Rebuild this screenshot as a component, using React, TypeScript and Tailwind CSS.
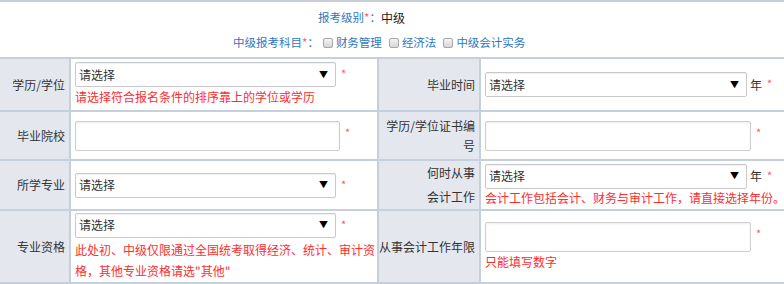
import React from "react"

const font = { fontFamily: '"Noto Sans CJK SC", "Noto Sans", sans-serif' }

function Star() {
  return <span className="ml-[5px] self-start pt-[6px] text-[11px] leading-none text-[#ff5a5a]">*</span>
}

function Select({ width }: { width: string }) {
  return (
    <div
      className={`flex h-[25px] ${width} items-center justify-between rounded-[2px] border border-[#c9c9c9] bg-white pl-[3px] pr-[7px] text-[12px] text-[#333] shadow-[inset_0_1px_1px_rgba(0,0,0,0.06)]`}
    >
      <span>请选择</span>
      <span className="text-[9px] text-black">▼</span>
    </div>
  )
}

function Input({ width }: { width: string }) {
  return (
    <div
      className={`h-[30px] ${width} rounded-[2px] border border-[#cfcfcf] bg-white shadow-[inset_0_1px_2px_rgba(0,0,0,0.08)]`}
    />
  )
}

function Hint({ children, className = "" }: { children: React.ReactNode; className?: string }) {
  return <div className={`whitespace-nowrap text-[12px] text-[#ff2d2d] ${className}`}>{children}</div>
}

function Label({ children, className = "" }: { children: React.ReactNode; className?: string }) {
  return (
    <div className={`flex items-center justify-end bg-[#e4e8ee] pr-[4px] text-right text-[12px] text-[#333] ${className}`}>
      <div>{children}</div>
    </div>
  )
}

function Cell({ children }: { children: React.ReactNode }) {
  return <div className="flex min-w-0 flex-col justify-center overflow-hidden bg-white pl-[4px]">{children}</div>
}

function Check({ label }: { label: string }) {
  return (
    <label className="flex items-center gap-[3px]">
      <span className="inline-block h-[10px] w-[10px] rounded-[2px] border border-[#a8a8a8] bg-gradient-to-b from-[#f4f4f4] to-[#d6d6d6]" />
      <span>{label}</span>
    </label>
  )
}

export default function App() {
  return (
    <div className="h-[284px] w-[784px] overflow-hidden bg-white" style={font}>
      <div className="h-[2px] bg-[#c8ced6]" />

      {/* exam level & subjects */}
      <div className="h-[55px] text-[11.5px]">
        <div className="flex h-[30px] items-center pl-[318px] pt-[2px]">
          <span className="text-[#2f78c0]">
            报考级别<span className="text-[#ff5a5a]">*</span>：
          </span>
          <span className="text-[12px] text-[#222]">中级</span>
        </div>
        <div className="flex h-[22px] items-center pl-[233px] text-[#2f78c0]">
          <span>
            中级报考科目<span className="text-[#ff5a5a]">*</span>：
          </span>
          <div className="ml-[4px] flex items-center gap-[7px]">
            <Check label="财务管理" />
            <Check label="经济法" />
            <Check label="中级会计实务" />
          </div>
        </div>
      </div>

      {/* form table */}
      <div className="grid grid-cols-[69px_306px_100px_1fr] grid-rows-[51px_47px_48px_71px] gap-[2px] border-y-2 border-[#c6d0dc] bg-[#c6d0dc]">
        <Label>学历/学位</Label>
        <Cell>
          <div className="flex items-center">
            <Select width="w-[261px]" />
            <Star />
          </div>
          <Hint className="leading-[20px]">请选择符合报名条件的排序靠上的学位或学历</Hint>
        </Cell>
        <Label>毕业时间</Label>
        <Cell>
          <div className="flex items-center text-[12px] text-[#333]">
            <Select width="w-[262px]" />
            <span className="ml-[3px]">年</span>
            <Star />
          </div>
        </Cell>

        <Label>毕业院校</Label>
        <Cell>
          <div className="flex items-center">
            <Input width="w-[265px]" />
            <Star />
          </div>
        </Cell>
        <Label className="leading-[20px]">
          学历/学位证书编
          <br />号
        </Label>
        <Cell>
          <div className="flex items-center">
            <Input width="w-[266px]" />
            <Star />
          </div>
        </Cell>

        <Label>所学专业</Label>
        <Cell>
          <div className="flex items-center">
            <Select width="w-[261px]" />
            <Star />
          </div>
        </Cell>
        <Label className="leading-[24px]">
          何时从事
          <br />
          会计工作
        </Label>
        <Cell>
          <div className="flex items-center text-[12px] text-[#333]">
            <Select width="w-[262px]" />
            <span className="ml-[3px]">年</span>
            <Star />
          </div>
          <Hint className="leading-[18px]">会计工作包括会计、财务与审计工作，请直接选择年份。</Hint>
        </Cell>

        <Label>专业资格</Label>
        <Cell>
          <div className="flex items-center">
            <Select width="w-[261px]" />
            <Star />
          </div>
          <Hint className="mt-[1px] leading-[21px]">
            此处初、中级仅限通过全国统考取得经济、统计、审计资
            <br />
            格，其他专业资格请选"其他"
          </Hint>
        </Cell>
        <Label>从事会计工作年限</Label>
        <Cell>
          <div className="flex items-center">
            <Input width="w-[266px]" />
            <Star />
          </div>
          <Hint className="leading-[20px]">只能填写数字</Hint>
        </Cell>
      </div>
    </div>
  )
}
